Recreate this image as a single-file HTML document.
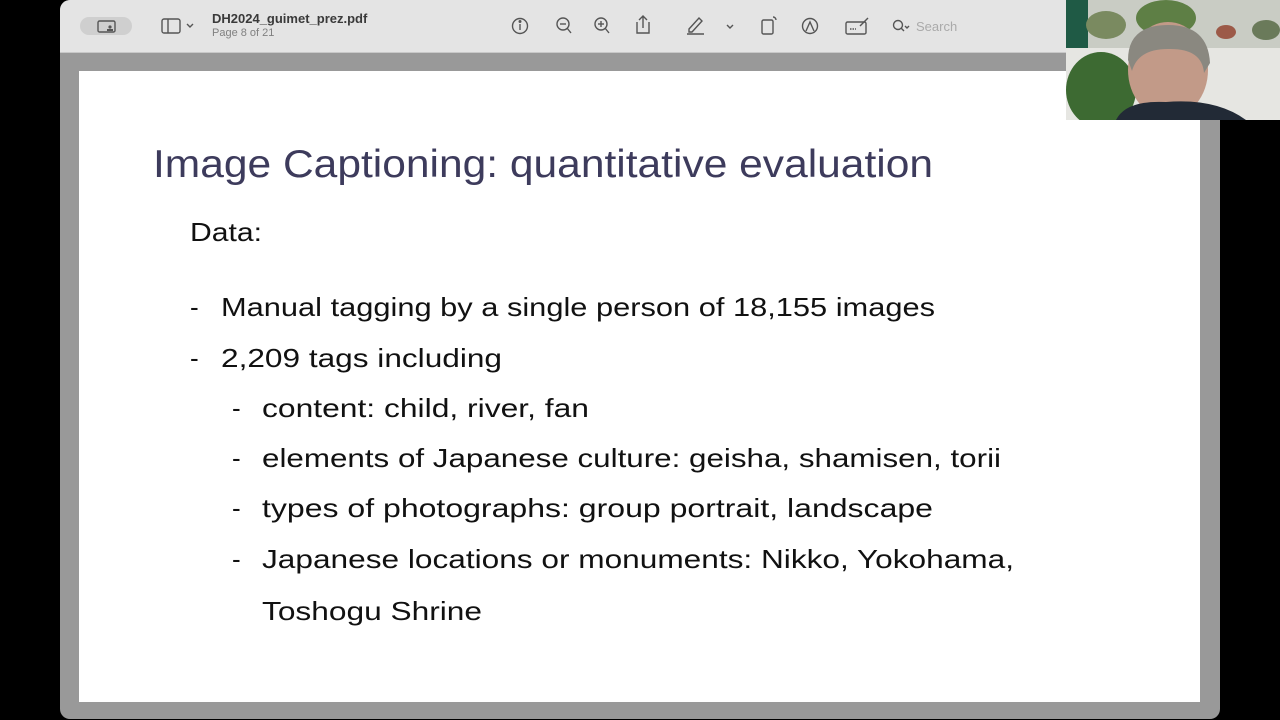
<!DOCTYPE html>
<html><head><meta charset="utf-8"><style>
html,body{margin:0;padding:0;width:1280px;height:720px;background:#000;overflow:hidden;font-family:"Liberation Sans",sans-serif}
.win{position:absolute;left:60px;top:0;width:1160px;height:719px;background:#999;border-radius:10px;overflow:hidden}
.tb{position:absolute;left:0;top:0;width:1160px;height:52px;background:#e4e4e4;border-bottom:1px solid #c8c8c8}
.page{position:absolute;left:19px;top:71px;width:1121px;height:631px;background:#fff}
.t1{position:absolute;left:152px;top:11px;font-size:13px;font-weight:bold;color:#3a3a3a}
.t2{position:absolute;left:152px;top:27px;font-size:11px;color:#808080}
svg{position:absolute}
</style></head><body>
<div class="win">
 <div class="tb">
  <div style="position:absolute;left:20px;top:17px;width:52px;height:18px;border-radius:9px;background:#cfcfcf"></div>
  <div class="t1">DH2024_guimet_prez.pdf</div>
  <div class="t2">Page 8 of 21</div>
 </div>
 <div class="page"></div>
</div>
<svg width="1280" height="60" style="left:0;top:0" fill="none" stroke="#555" stroke-width="1.4">
 <rect x="98" y="21" width="17" height="11" rx="1.5"/><circle cx="110" cy="27" r="1.6" fill="#555" stroke="none"/><rect x="107" y="29" width="6" height="2" fill="#555" stroke="none"/>
 <rect x="162" y="19" width="18" height="14" rx="2"/><line x1="168" y1="19" x2="168" y2="33"/>
 <path d="M187 24l3 3 3-3"/>
 <circle cx="520" cy="26" r="7.5"/><line x1="520" y1="24" x2="520" y2="30"/><circle cx="520" cy="21.5" r=".8" fill="#555"/>
 <circle cx="563" cy="24" r="6"/><line x1="567" y1="28" x2="571" y2="33"/><line x1="560" y1="24" x2="566" y2="24"/>
 <circle cx="601" cy="24" r="6"/><line x1="605" y1="28" x2="609" y2="33"/><line x1="598" y1="24" x2="604" y2="24"/><line x1="601" y1="21" x2="601" y2="27"/>
 <path d="M637 22v11h12V22M643 17v11M639 20l4-4 4 4"/>
 <path d="M689 29l10-11 3 3-10 11h-3zM687 34h17"/>
 <path d="M727 25l3 3 3-3"/>
 <rect x="762" y="20" width="11" height="14" rx="1.5"/><path d="M773 17a3 3 0 0 1 3 3"/>
 <circle cx="810" cy="26" r="7.5"/><path d="M806 31l4-9 4 9"/>
 <rect x="846" y="22" width="20" height="12" rx="1.5"/><path d="M860 26l8-8"/><line x1="850" y1="29" x2="856" y2="29" stroke-dasharray="1.5 1"/>
 <circle cx="898" cy="25" r="4.5"/><line x1="901" y1="28" x2="904" y2="31"/><path d="M905 26l2 2 2-2"/>
 <text x="916" y="31" fill="#aaa" stroke="none" font-size="13" font-family="Liberation Sans">Search</text>
</svg>
<svg width="1280" height="720" style="left:0;top:0" font-family="Liberation Sans, sans-serif">
 <text x="153" y="177" font-size="39" fill="#3d3b5c" textLength="780" lengthAdjust="spacingAndGlyphs">Image Captioning: quantitative evaluation</text>
 <g font-size="26" fill="#111">
 <text x="190" y="241" textLength="72" lengthAdjust="spacingAndGlyphs">Data:</text>
 <text x="190" y="316">-</text><text x="221" y="316" textLength="714" lengthAdjust="spacingAndGlyphs">Manual tagging by a single person of 18,155 images</text>
 <text x="190" y="367">-</text><text x="221" y="367" textLength="281" lengthAdjust="spacingAndGlyphs">2,209 tags including</text>
 <text x="232" y="417">-</text><text x="262" y="417" textLength="327" lengthAdjust="spacingAndGlyphs">content: child, river, fan</text>
 <text x="232" y="467">-</text><text x="262" y="467" textLength="739" lengthAdjust="spacingAndGlyphs">elements of Japanese culture: geisha, shamisen, torii</text>
 <text x="232" y="517">-</text><text x="262" y="517" textLength="671" lengthAdjust="spacingAndGlyphs">types of photographs: group portrait, landscape</text>
 <text x="232" y="568">-</text><text x="262" y="568" textLength="752" lengthAdjust="spacingAndGlyphs">Japanese locations or monuments: Nikko, Yokohama,</text>
 <text x="262" y="620" textLength="220" lengthAdjust="spacingAndGlyphs">Toshogu Shrine</text>
 </g>
</svg>
<svg width="214" height="120" style="left:1066px;top:0">
 <rect width="214" height="120" fill="#d8d9d4"/>
 <rect width="214" height="48" fill="#c9ccc4"/>
 <rect x="0" y="0" width="22" height="48" fill="#1f5a45"/>
 <rect x="0" y="48" width="214" height="72" fill="#e6e6e2"/>
 <ellipse cx="35" cy="90" rx="35" ry="38" fill="#3d6a32"/>
 <ellipse cx="100" cy="18" rx="30" ry="18" fill="#5e7f45"/>
 <ellipse cx="40" cy="25" rx="20" ry="14" fill="#7a8a60"/>
 <ellipse cx="160" cy="32" rx="10" ry="7" fill="#9c5a48"/>
 <ellipse cx="200" cy="30" rx="14" ry="10" fill="#6a7a5a"/>
 <ellipse cx="102" cy="70" rx="40" ry="48" fill="#c29a88"/>
 <path d="M62 60q0-35 40-35 40 0 42 38l-6 10q-2-25-36-24-30 0-36 22z" fill="#8a8880"/>
 <path d="M50 120q10-20 50-18 50-4 80 18z" fill="#222a36"/>
</svg>
</body></html>
